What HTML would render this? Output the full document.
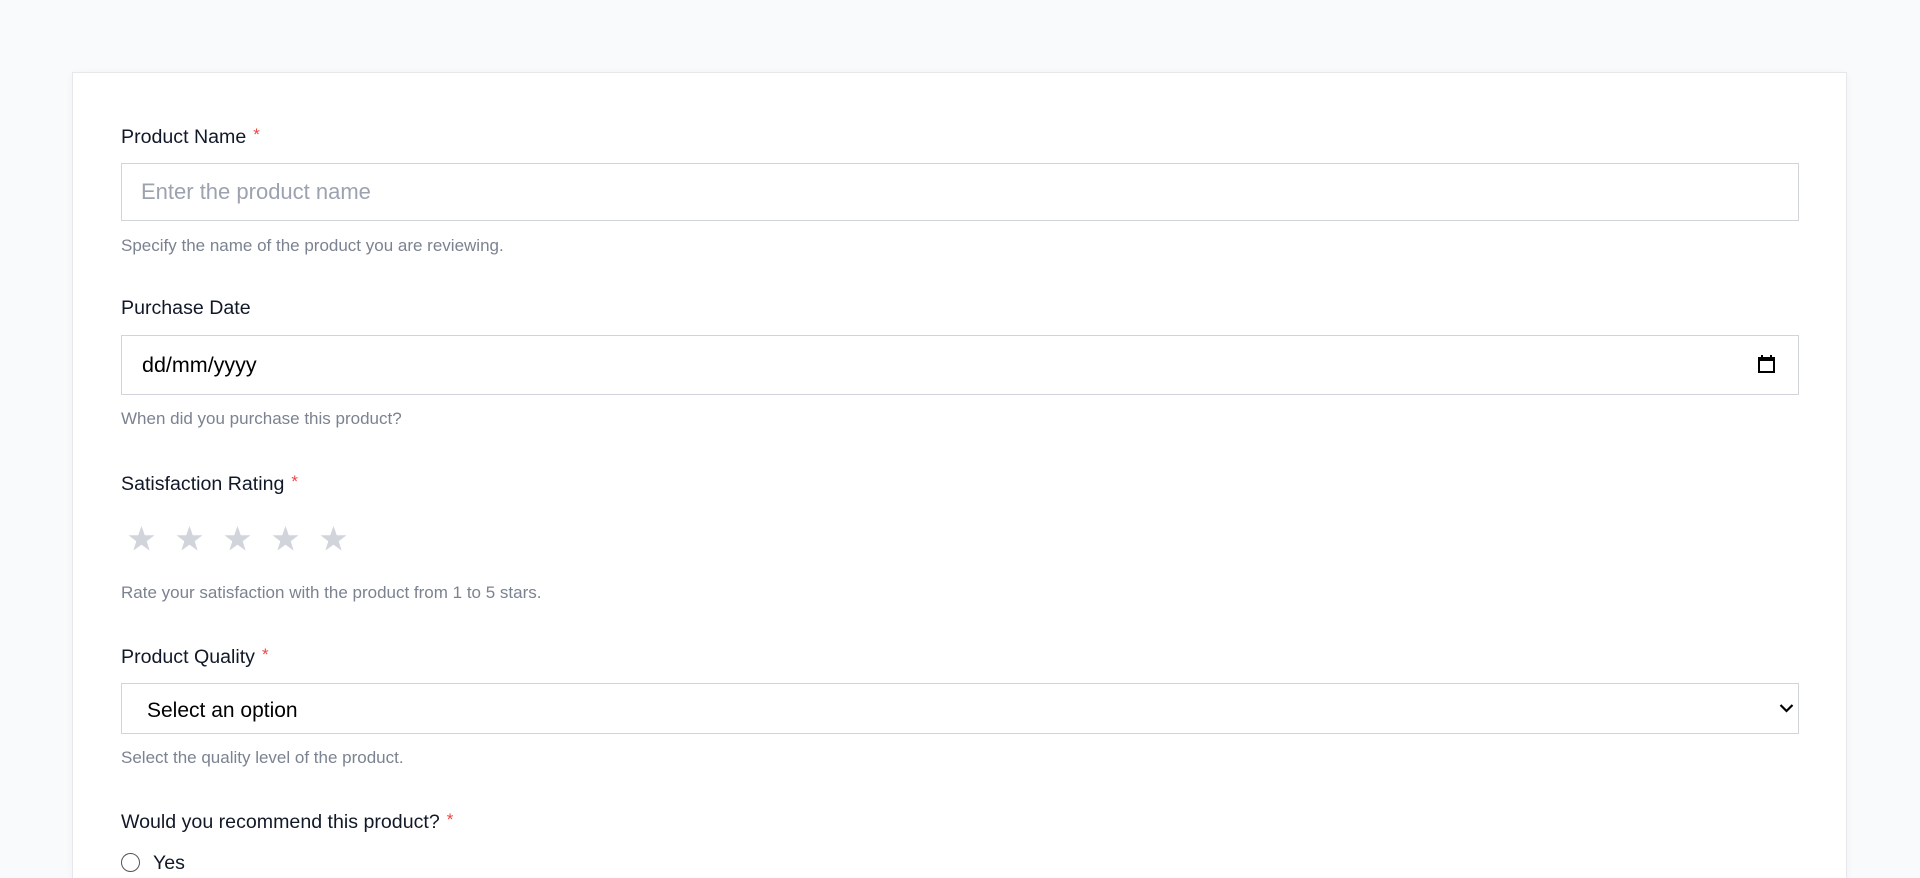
<!DOCTYPE html>
<html><head><style>
html,body{margin:0;padding:0;background:#f9fafb;width:1920px;height:878px;overflow:hidden;font-family:"Liberation Sans",Arial,sans-serif;}
.card{position:absolute;left:72px;top:72px;width:1775px;height:806px;background:#fff;border:1px solid #e5e7eb;border-bottom:none;box-sizing:border-box;box-shadow:0 2px 8px rgba(0,0,0,0.04);}
.t{position:absolute;line-height:1;white-space:nowrap;}
.lbl{font-size:19.6px;color:#111827;}
.lbl span{color:#ef4444;font-size:17px;vertical-align:3px;margin-left:7px;}
.help{font-size:17px;color:#7b8290;}
.box{position:absolute;left:121px;width:1678px;border:1px solid #d1d5db;box-sizing:border-box;background:#fff;}
</style></head><body>
<div class="card"></div>
<div class="t lbl" style="left:121px;top:126px">Product Name<span>*</span></div>
<div class="box" style="top:163px;height:58px"></div>
<div class="t" style="left:141px;top:181px;font-size:22px;color:#9ca3af">Enter the product name</div>
<div class="t help" style="left:121px;top:237px">Specify the name of the product you are reviewing.</div>

<div class="t lbl" style="left:121px;top:299px">Purchase Date</div>
<div class="box" style="top:335px;height:60px"></div>
<div class="t" style="left:142px;top:355px;font-size:21.5px;color:#000">dd/mm/yyyy</div>
<svg style="position:absolute;left:1758px;top:355px" width="18" height="19" viewBox="0 0 18 19"><rect x="1" y="3" width="15" height="14" fill="none" stroke="#000" stroke-width="2"/><rect x="1" y="2" width="15" height="4" fill="#000"/><rect x="3" y="0" width="2" height="3" fill="#000"/><rect x="12" y="0" width="2" height="3" fill="#000"/></svg>
<div class="t help" style="left:121px;top:410px">When did you purchase this product?</div>

<div class="t lbl" style="left:121px;top:473px">Satisfaction Rating<span>*</span></div>
<svg style="position:absolute;left:126px;top:525px" width="240" height="28" viewBox="0 0 240 28">
<g fill="#d1d5db">
<path id="s" d="M15.5 1 L18.8 10.3 L28.5 10.3 L20.7 16.2 L23.6 25.5 L15.5 19.8 L7.4 25.5 L10.3 16.2 L2.5 10.3 L12.2 10.3 Z"/>
<use href="#s" x="48"/><use href="#s" x="96"/><use href="#s" x="144"/><use href="#s" x="192"/>
</g></svg>
<div class="t help" style="left:121px;top:584px">Rate your satisfaction with the product from 1 to 5 stars.</div>

<div class="t lbl" style="left:121px;top:646px">Product Quality<span>*</span></div>
<div class="box" style="top:683px;height:51px"></div>
<div class="t" style="left:147px;top:700px;font-size:21px;color:#000">Select an option</div>
<svg style="position:absolute;left:1779px;top:703px" width="15" height="10" viewBox="0 0 15 10"><path d="M1.5 2 L7.5 8 L13.5 2" fill="none" stroke="#000" stroke-width="2.2"/></svg>
<div class="t help" style="left:121px;top:749px">Select the quality level of the product.</div>

<div class="t lbl" style="left:121px;top:811px">Would you recommend this product?<span>*</span></div>
<div style="position:absolute;left:121px;top:853px;width:19px;height:19px;border:1.5px solid #555;border-radius:50%;box-sizing:border-box"></div>
<div class="t" style="left:153px;top:854px;font-size:19.6px;color:#111827">Yes</div>
</body></html>
